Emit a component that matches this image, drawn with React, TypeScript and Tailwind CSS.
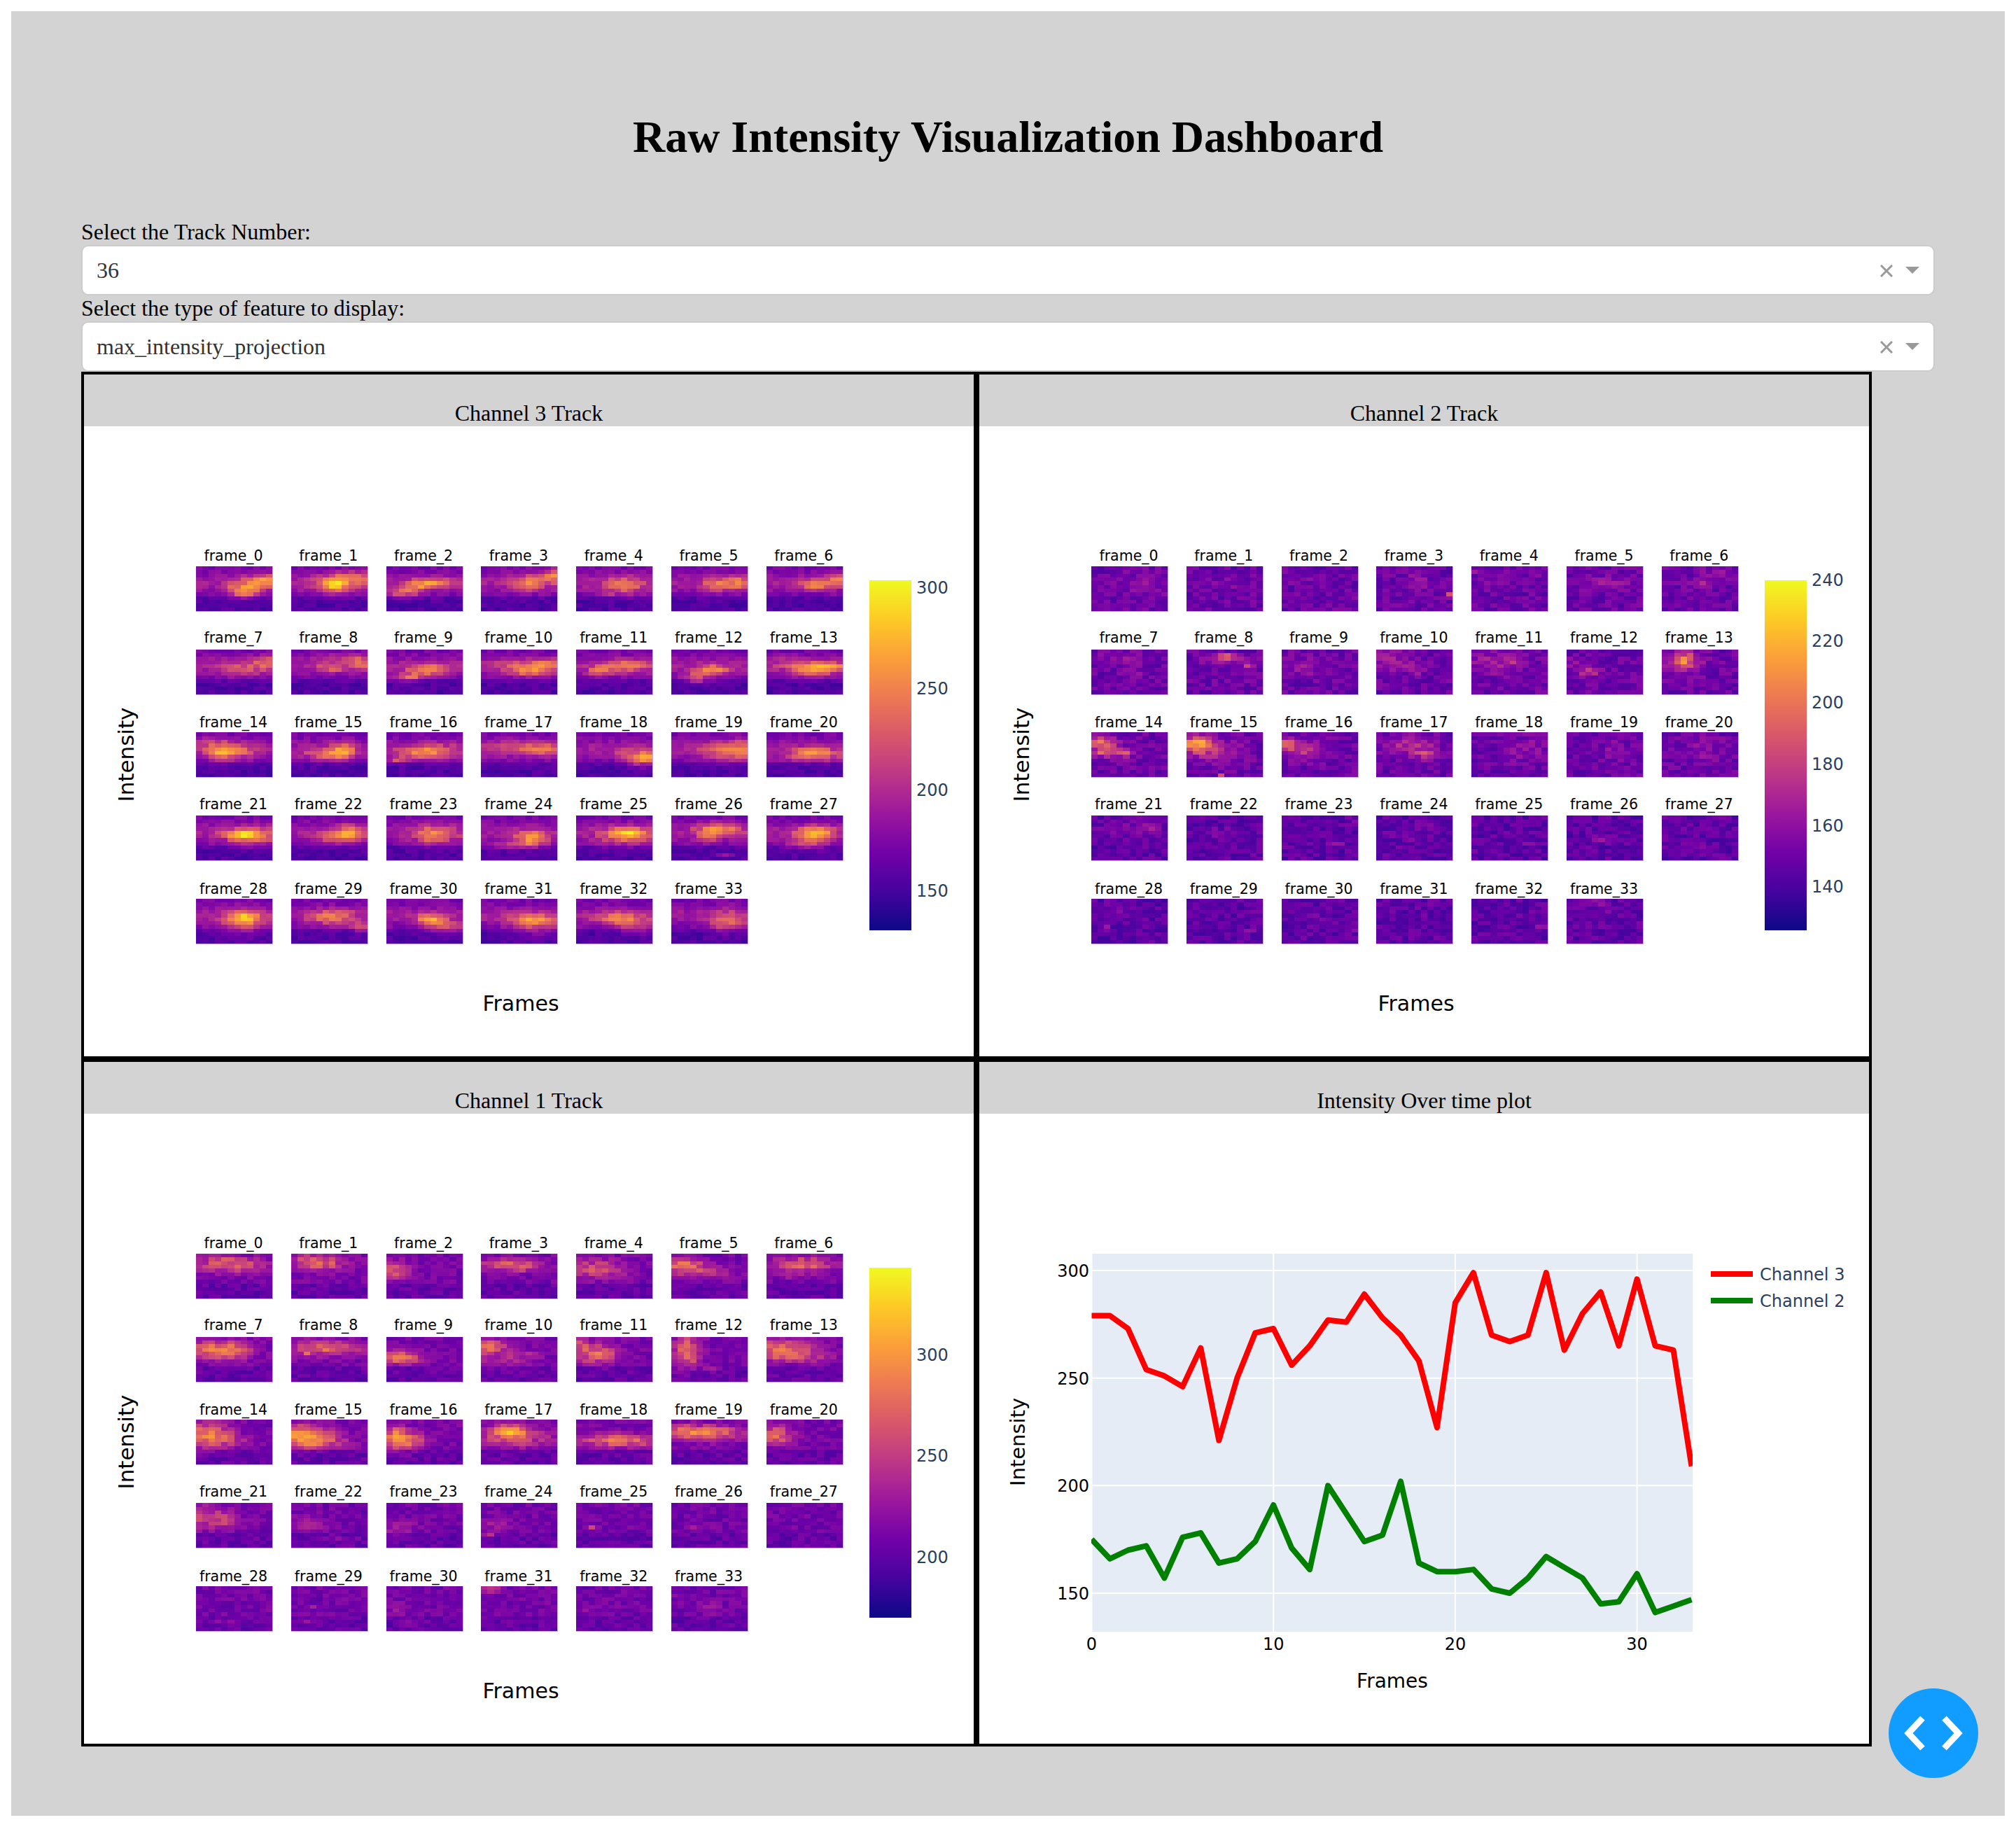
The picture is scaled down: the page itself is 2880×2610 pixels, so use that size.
import React from "react";

type Blob = [number, number, number, number, number];

const PLASMA = ["#0d0887", "#46039f", "#7201a8", "#9c179e", "#bd3786", "#d8576b", "#ed7953", "#fb9f3a", "#fdca26", "#f0f921"];
const RGB = PLASMA.map((h) => [parseInt(h.slice(1, 3), 16), parseInt(h.slice(3, 5), 16), parseInt(h.slice(5, 7), 16)]);

function plasma(t: number) {
  const v = Math.max(0, Math.min(0.999, t)) * 9;
  const i = Math.floor(v);
  const f = v - i;
  const c = RGB[i].map((a, k) => Math.round(a + (RGB[i + 1][k] - a) * f));
  return `rgb(${c[0]},${c[1]},${c[2]})`;
}

function rng(seed: number) {
  let a = seed >>> 0;
  return () => {
    a = (a + 0x6d2b79f5) >>> 0;
    let t = a;
    t = Math.imul(t ^ (t >>> 15), t | 1);
    t ^= t + Math.imul(t ^ (t >>> 7), t | 61);
    return ((t ^ (t >>> 14)) >>> 0) / 4294967296;
  };
}

const CH3: Blob[][] = [
  [[7, 6, 1.5, 1, 0.62], [10, 3.5, 2, 1, 0.58]],
  [[6.5, 4.5, 1, 1, 0.55], [9, 2.5, 2.5, 1, 0.36], [6, 4.5, 2.5, 1.3, 0.25]],
  [[7, 4, 2, 0.8, 0.5], [2, 6.5, 1.5, 0.8, 0.42], [4.5, 5, 1.2, 0.7, 0.3]],
  [[7, 4, 1.2, 1, 0.42], [11, 2, 1, 1, 0.42], [8, 3, 3, 2, 0.12]],
  [[7, 4.5, 2, 1.5, 0.38], [4.5, 7, 0.6, 0.5, 0.25]],
  [[7, 4.5, 1.5, 1, 0.38], [10.5, 4, 1, 1, 0.34], [9, 3, 2, 1, 0.1]],
  [[7.5, 4.5, 1.5, 0.8, 0.48], [11, 3, 1, 0.8, 0.38], [9, 3, 2, 1, 0.1]],
  [[7, 5, 2, 1.2, 0.22], [10.5, 3, 1.2, 1, 0.34], [5, 3, 2, 1, 0.1]],
  [[6, 4.5, 1.5, 0.6, 0.28], [10.5, 3, 1.2, 1.2, 0.38], [6, 2, 2, 1, 0.12]],
  [[6, 5, 2, 1, 0.48], [3, 7, 1.5, 0.6, 0.38]],
  [[7, 5, 2, 1, 0.48], [9.5, 3.5, 1.5, 1, 0.38], [4, 3, 2, 1, 0.12]],
  [[7, 4, 2.5, 1, 0.42], [3, 5.5, 1, 0.7, 0.38]],
  [[6, 5, 1.5, 0.8, 0.48], [3.5, 7, 1.2, 1, 0.38]],
  [[6.5, 5, 2, 1, 0.52], [9.5, 4, 2, 0.7, 0.42], [3, 3, 2, 1, 0.15]],
  [[5, 4.5, 2, 1.3, 0.46], [3, 5, 1, 1, 0.36], [2, 2, 2, 1, 0.15]],
  [[7.5, 4.5, 1.2, 1.2, 0.56], [5, 5.5, 2, 0.8, 0.38]],
  [[5.5, 5, 2.5, 1, 0.46], [1.5, 7, 0.8, 0.6, 0.3], [7, 3.5, 2, 1, 0.15]],
  [[9, 4, 2.5, 1, 0.42], [3, 3, 3, 1.5, 0.1]],
  [[9.5, 6.5, 1.2, 1.2, 0.48], [11, 6, 0.7, 1, 0.38], [6.5, 5, 0.8, 0.8, 0.26]],
  [[9, 4.5, 2.5, 1.5, 0.42], [11, 3, 1, 1, 0.15]],
  [[7, 4.5, 1.5, 0.6, 0.58], [7, 6, 3, 0.8, 0.34]],
  [[7, 4.5, 1.5, 0.6, 0.62], [8, 5, 2.5, 1.5, 0.38]],
  [[7.5, 5, 2, 1, 0.46], [9, 3.5, 1.5, 1, 0.32]],
  [[7, 4.5, 2, 1.5, 0.46]],
  [[7.5, 5.5, 1.5, 1.3, 0.62], [4, 7.5, 2, 0.6, 0.32]],
  [[7.5, 4, 1.5, 0.7, 0.62], [7, 5, 2.5, 1.5, 0.38]],
  [[7, 3, 2, 1, 0.5], [5, 5, 1, 1, 0.28], [8, 10, 1, 0.4, 0.2]],
  [[7.5, 4, 1.5, 1, 0.6], [6, 6, 2, 1.5, 0.32]],
  [[7, 4.5, 1.2, 1, 0.66], [7, 6, 2.5, 2, 0.28]],
  [[6, 4.5, 2, 1.2, 0.42], [10.5, 7, 1, 0.8, 0.34]],
  [[6.5, 5, 1.3, 0.8, 0.66], [9, 7, 2, 1, 0.34]],
  [[7.5, 5, 2.5, 1, 0.46], [8, 7, 2, 1.5, 0.24]],
  [[6, 5, 2, 1, 0.46], [9, 6.5, 1.5, 1.5, 0.24]],
  [[8.5, 5.5, 1.7, 1.7, 0.36]],
];

const CH2: Blob[][] = [
  [[8, 4.5, 2, 2, 0.1], [8.5, 1.5, 0.5, 0.5, 0.15]],
  [[6, 4, 1.5, 1, 0.08]],
  [[11.5, 8, 0.5, 0.5, 0.3], [3, 3, 1, 1, 0.08]],
  [[6, 3, 1, 1.5, 0.15], [11, 7, 0.6, 0.6, 0.25]],
  [[0.5, 1, 0.5, 0.5, 0.15], [3.5, 4, 1, 1, 0.1], [9.5, 1.5, 0.5, 0.5, 0.18]],
  [[6, 4, 2.5, 1.2, 0.12]],
  [[6, 4, 1.5, 0.6, 0.2], [9, 1.5, 2, 1, 0.1]],
  [[3, 1.5, 2, 1, 0.1], [6, 5, 1, 2, 0.1]],
  [[5.5, 1.5, 1, 0.5, 0.45], [9.5, 4, 0.5, 0.5, 0.42], [7, 2.5, 3, 0.8, 0.12]],
  [[3, 4, 1.5, 1.5, 0.15]],
  [[1.5, 2, 1.2, 1.5, 0.2], [5.5, 5.5, 0.6, 0.6, 0.3], [4, 4, 2, 1, 0.12]],
  [[3, 2.5, 3, 1.5, 0.15], [6, 2.5, 0.5, 0.5, 0.22], [4, 5, 1.5, 1, 0.12]],
  [[3, 5.5, 1, 0.7, 0.3], [1, 3.5, 1, 1, 0.12]],
  [[3, 2.5, 1, 1.2, 0.45], [3, 3, 2.2, 2, 0.18]],
  [[1, 2.5, 1.5, 1.2, 0.48], [2.5, 5, 1.5, 0.6, 0.42], [5, 5, 0.8, 0.8, 0.18]],
  [[1.2, 2.5, 1.2, 1.2, 0.72], [4, 4.5, 2.5, 2, 0.22], [5, 11, 0.4, 0.4, 0.25]],
  [[0.5, 2.5, 0.8, 0.7, 0.58], [3, 4.5, 2, 1.5, 0.25], [4, 3.5, 0.5, 0.4, 0.3]],
  [[5, 3, 2.5, 1.5, 0.25], [7, 5.5, 1, 0.7, 0.32], [7.5, 1.5, 0.4, 0.4, 0.3]],
  [[8, 4, 2, 2, 0.12]],
  [[7, 4, 1, 2, 0.1]],
  [[6, 4, 1.5, 2, 0.12]],
  [[6, 3, 3, 1, 0.1], [8, 3, 1, 0.6, 0.14]],
  [[5, 4, 2, 0.8, 0.08]],
  [[8, 7, 0.8, 0.5, 0.15], [11, 1.5, 0.4, 0.4, 0.18]],
  [[6, 4, 2, 2, 0.05]],
  [[8.5, 7, 0.4, 0.4, 0.2]],
  [[5, 6, 1, 0.5, 0.1]],
  [[7, 3.5, 1.5, 0.5, 0.14], [5, 7, 1, 0.8, 0.12]],
  [[5, 3, 1, 1, 0.08], [2, 7, 0.4, 0.4, 0.18]],
  [[9.5, 8, 0.7, 0.7, 0.1]],
  [[11, 7.5, 0.6, 0.5, 0.15], [4, 5, 2, 1, 0.05]],
  [],
  [[10.5, 7, 0.6, 0.6, 0.15]],
  [[4.5, 0.5, 1, 0.4, 0.2], [6, 3, 1.5, 1, 0.07]],
];

const CH1: Blob[][] = [
  [[5, 2.5, 3.5, 1.2, 0.38], [3, 1, 2, 0.7, 0.1]],
  [[4, 2, 2.5, 1.2, 0.42], [2, 0.5, 1, 0.5, 0.15]],
  [[0.5, 4, 1.5, 1.5, 0.4]],
  [[4, 2.5, 3, 1, 0.4], [7, 3.5, 1, 0.5, 0.15]],
  [[2, 3.5, 3, 1.5, 0.34], [6.5, 4.5, 0.6, 0.6, 0.1]],
  [[1.5, 2.5, 2, 1, 0.48], [4, 4.5, 3, 1, 0.24]],
  [[5, 2.5, 3, 1.2, 0.44], [3.5, 5.5, 1, 0.4, 0.2]],
  [[3, 3, 3, 1.5, 0.48], [5, 3.5, 1.5, 1, 0.18]],
  [[5, 2.5, 3.5, 1.2, 0.44], [2, 4, 0.6, 0.6, 0.2]],
  [[1.5, 5, 2, 1, 0.58]],
  [[1, 2, 1.5, 1, 0.44], [3, 5, 3, 1.5, 0.2], [7.5, 4.5, 0.6, 0.5, 0.3]],
  [[2.5, 4, 2, 1.5, 0.48], [0.5, 1, 0.5, 0.8, 0.3]],
  [[2, 3.5, 1.2, 2.5, 0.5], [6, 8, 1, 0.4, 0.2]],
  [[2, 3, 3, 1.5, 0.48], [5, 5, 3, 0.8, 0.2]],
  [[1.5, 3.5, 2, 2, 0.54], [5, 5, 2, 1, 0.18]],
  [[1.5, 3.5, 2.5, 1.5, 0.62], [3.5, 5.5, 3, 1, 0.34]],
  [[2, 5, 2, 1.5, 0.54], [1, 3, 1, 1, 0.3]],
  [[4, 2.5, 1.5, 1, 0.72], [5, 4.5, 4, 1.5, 0.3]],
  [[6, 5, 3.5, 1, 0.52]],
  [[3.5, 2.5, 3.5, 1, 0.5], [6, 4, 4, 1, 0.2]],
  [[1, 3.5, 1.5, 1.5, 0.48]],
  [[1, 3, 2.5, 2, 0.28], [0.3, 2.5, 0.5, 0.5, 0.22], [4, 4.5, 2, 1, 0.14]],
  [[2, 5, 1.5, 1, 0.22], [6, 9, 2, 0.4, 0.1]],
  [[1, 6, 2, 1.5, 0.14]],
  [[2, 5, 1.2, 1.2, 0.18], [0.5, 8, 0.7, 0.4, 0.34]],
  [[2, 6, 0.5, 0.5, 0.24]],
  [[3, 6, 1, 0.5, 0.1]],
  [],
  [[11.5, 7.5, 0.4, 0.4, 0.3], [3, 9, 2, 0.4, 0.08]],
  [[2, 9, 0.5, 0.7, 0.14], [3, 5, 0.5, 0.5, 0.12]],
  [[1, 5.5, 1, 1, 0.12], [3.5, 9, 1, 0.6, 0.1]],
  [[1, 0.5, 1, 0.5, 0.34]],
  [[1.5, 6, 0.5, 0.5, 0.14]],
  [[5.5, 5.5, 1, 1, 0.12], [0.5, 1.5, 0.6, 0.5, 0.14]],
];

type Kind = 3 | 2 | 1;

function baseFor(kind: Kind, r: number, frame: number) {
  if (kind === 3) {
    if (r >= 8) return 0.14 + (r === 8 ? 0.03 : 0);
    const d = (r - 4) / 2.6;
    return 0.22 + 0.13 * Math.exp(-d * d);
  }
  if (kind === 2) return frame >= 21 ? 0.175 : 0.205;
  return r >= 8 ? 0.19 : 0.235 - (frame >= 21 ? 0.01 : 0);
}

function heat(kind: Kind, frame: number, blobs: Blob[]) {
  const rand = rng(kind * 1000 + frame * 37 + 11);
  const noise = kind === 3 ? 0.1 : kind === 2 ? 0.15 : 0.12;
  const out: number[] = [];
  for (let r = 0; r < 12; r++) {
    for (let c = 0; c < 12; c++) {
      const jitter = rand() - 0.5;
      let t = baseFor(kind, r, frame);
      for (const [cx, cy, sx, sy, a] of blobs) {
        const dx = (c - cx) / sx;
        const dy = (r - cy) / sy;
        const wide = sx > 0.7 || sy > 0.7;
        t += (wide ? a * 0.85 : a) * Math.exp(-(dx * dx + dy * dy) / (wide ? 2.6 : 1.2));
      }
      t += jitter * (t > 0.4 ? noise * 1.8 : noise);
      if (t > 0.62) t = 0.62 + (t - 0.62) * 0.72;
      out.push(t);
    }
  }
  return out;
}

const ROW_Y = [200, 318.7, 437.4, 556.4, 675];
const LABEL_Y = [185, 302, 423, 540, 661];
const COL_STEP = 135.8;

function HeatCell({ kind, frame, blobs }: { kind: Kind; frame: number; blobs: Blob[] }) {
  const col = frame % 7;
  const row = Math.floor(frame / 7);
  const x = 160 + col * COL_STEP;
  const y = ROW_Y[row];
  const cw = 109 / 12;
  const ch = 64 / 12;
  const vals = heat(kind, frame, blobs);
  return (
    <g>
      <text x={x + 53.5} y={LABEL_Y[row]} textAnchor="middle" dominantBaseline="central" className="fill-black text-[20.5px]">
        {`frame_${frame}`}
      </text>
      <g shapeRendering="crispEdges">
        {vals.map((v, i) => (
          <rect key={i} x={x + (i % 12) * cw} y={y + Math.floor(i / 12) * ch} width={cw + 0.4} height={ch + 0.4} fill={plasma(v)} />
        ))}
      </g>
      <path d={`M${x + 109.5} ${y}V${y + 64.5}H${x}`} fill="none" stroke="#c9a9e8" strokeWidth="1" shapeRendering="crispEdges" />
    </g>
  );
}

function HeatPanel({ kind, data, ticks }: { kind: Kind; data: Blob[][]; ticks: [string, number][] }) {
  const gid = `plasma-${kind}`;
  return (
    <svg viewBox="0 0 1271 900" className="block h-[900px] w-[1271px] bg-white font-['DejaVu_Sans',sans-serif]">
      <defs>
        <linearGradient id={gid} x1="0" y1="1" x2="0" y2="0">
          {PLASMA.map((c, i) => (
            <stop key={c} offset={i / 9} stopColor={c} />
          ))}
        </linearGradient>
      </defs>
      {data.map((b, f) => (
        <HeatCell key={f} kind={kind} frame={f} blobs={b} />
      ))}
      <rect x="1122" y="220" width="60" height="500" fill={`url(#${gid})`} />
      {ticks.map(([t, y]) => (
        <text key={t} x="1189" y={y} dominantBaseline="central" className="fill-[#2a3f5f] text-[24px]">
          {t}
        </text>
      ))}
      <text x="60" y="469" textAnchor="middle" dominantBaseline="central" transform="rotate(-90 60 469)" className="fill-black text-[31px]">
        Intensity
      </text>
      <text x="624" y="824" textAnchor="middle" dominantBaseline="central" className="fill-black text-[30px]">
        Frames
      </text>
    </svg>
  );
}

const RED = [279, 279, 273, 254, 251, 246, 264, 221, 250, 271, 273, 256, 265, 277, 276, 289, 278, 270, 258, 227, 285, 299, 270, 267, 270, 299, 263, 280, 290, 265, 296, 265, 263, 209];
const GREEN = [175, 166, 170, 172, 157, 176, 178, 164, 166, 174, 191, 171, 161, 200, 187, 174, 177, 202, 164, 160, 160, 161, 152, 150, 157, 167, 162, 157, 145, 146, 159, 141, 144, 147];

function LinePanel() {
  const X = (i: number) => 160.5 + i * 25.97;
  const Y = (v: number) => 224 + (300 - v) * 3.073;
  const pts = (a: number[]) => a.map((v, i) => `${X(i).toFixed(1)},${Y(v).toFixed(1)}`).join(" ");
  return (
    <svg viewBox="0 0 1271 900" className="block h-[900px] w-[1271px] bg-white font-['DejaVu_Sans',sans-serif]">
      <defs>
        <clipPath id="plot-clip">
          <rect x="160" y="200" width="859" height="540" />
        </clipPath>
      </defs>
      <rect x="160" y="200" width="859" height="540" fill="#e5ecf6" />
      {[0, 10, 20, 30].map((t) => (
        <line key={t} x1={X(t)} x2={X(t)} y1="200" y2="740" stroke="#ffffff" strokeWidth="2" />
      ))}
      {[150, 200, 250, 300].map((t) => (
        <line key={t} x1="160" x2="1019" y1={Y(t)} y2={Y(t)} stroke="#ffffff" strokeWidth="2" />
      ))}
      <g clipPath="url(#plot-clip)">
        <polyline points={pts(RED)} fill="none" stroke="#ff0000" strokeWidth="8" strokeLinejoin="round" />
        <polyline points={pts(GREEN)} fill="none" stroke="#008000" strokeWidth="8" strokeLinejoin="round" />
      </g>
      {[150, 200, 250, 300].map((t) => (
        <text key={t} x="157" y={Y(t) + 1} textAnchor="end" dominantBaseline="central" className="fill-black text-[24px]">
          {t}
        </text>
      ))}
      {[0, 10, 20, 30].map((t) => (
        <text key={t} x={X(t)} y="758" textAnchor="middle" dominantBaseline="central" className="fill-black text-[24px]">
          {t}
        </text>
      ))}
      <text x="590" y="810" textAnchor="middle" dominantBaseline="central" className="fill-black text-[28px]">
        Frames
      </text>
      <text x="55" y="469" textAnchor="middle" dominantBaseline="central" transform="rotate(-90 55 469)" className="fill-black text-[29px]">
        Intensity
      </text>
      <line x1="1045" x2="1105" y1="229" y2="229" stroke="#ff0000" strokeWidth="8" />
      <line x1="1045" x2="1105" y1="267" y2="267" stroke="#008000" strokeWidth="8" />
      <text x="1115" y="230" dominantBaseline="central" className="fill-[#2a3f5f] text-[24px]">
        Channel 3
      </text>
      <text x="1115" y="268" dominantBaseline="central" className="fill-[#2a3f5f] text-[24px]">
        Channel 2
      </text>
    </svg>
  );
}

function Dropdown({ label, value }: { label: string; value: string }) {
  return (
    <div>
      <label className="block h-[37px] text-[32px] leading-[37px] text-black">{label}</label>
      <div className="flex h-[72px] w-full items-center rounded-[10px] border-2 border-[#cccccc] bg-white pl-[20px] pr-[20px]">
        <span className="flex-1 text-[32px] leading-[64px] text-[#333333]">{value}</span>
        <svg viewBox="0 0 18 18" className="mr-[18px] mt-[2px] h-[18px] w-[18px]">
          <path d="M1 1L17 17M17 1L1 17" stroke="#999999" strokeWidth="3" fill="none" />
        </svg>
        <svg viewBox="0 0 20 10" className="h-[10px] w-[20px]">
          <path d="M0 0H20L10 10Z" fill="#999999" />
        </svg>
      </div>
    </div>
  );
}

function Panel({ title, children }: { title: string; children: React.ReactNode }) {
  return (
    <div className="h-[982px] w-[1279px] border-4 border-black">
      <div className="flex h-[74px] items-end justify-center bg-[#d3d3d3] text-[32px] leading-[37px] text-black">{title}</div>
      {children}
    </div>
  );
}

export default function App() {
  return (
    <div className="relative m-4 h-[2578px] bg-[#d3d3d3] px-[100px] pt-[143px] font-['Liberation_Serif',serif]">
      <h1 className="mb-[80px] h-[74px] text-center text-[64px] font-bold leading-[74px] text-black">
        Raw Intensity Visualization Dashboard
      </h1>
      <Dropdown label="Select the Track Number:" value="36" />
      <Dropdown label="Select the type of feature to display:" value="max_intensity_projection" />
      <div className="grid w-[2558px] grid-cols-[1279px_1279px]">
        <Panel title="Channel 3 Track">
          <HeatPanel kind={3} data={CH3} ticks={[["300", 231], ["250", 375], ["200", 520], ["150", 664]]} />
        </Panel>
        <Panel title="Channel 2 Track">
          <HeatPanel kind={2} data={CH2} ticks={[["240", 220], ["220", 307], ["200", 395], ["180", 483], ["160", 571], ["140", 658]]} />
        </Panel>
        <Panel title="Channel 1 Track">
          <HeatPanel kind={1} data={CH1} ticks={[["300", 345], ["250", 489], ["200", 634]]} />
        </Panel>
        <Panel title="Intensity Over time plot">
          <LinePanel />
        </Panel>
      </div>
      <div className="absolute left-[2682px] top-[2396px] h-32 w-32 rounded-full bg-[#119dff]">
        <svg viewBox="0 0 128 128" className="h-full w-full">
          <path d="M48.5 42.5L28.4 64L48.5 85.5M79.5 42.5L99.6 64L79.5 85.5" fill="none" stroke="#ffffff" strokeWidth="9" />
        </svg>
      </div>
    </div>
  );
}
